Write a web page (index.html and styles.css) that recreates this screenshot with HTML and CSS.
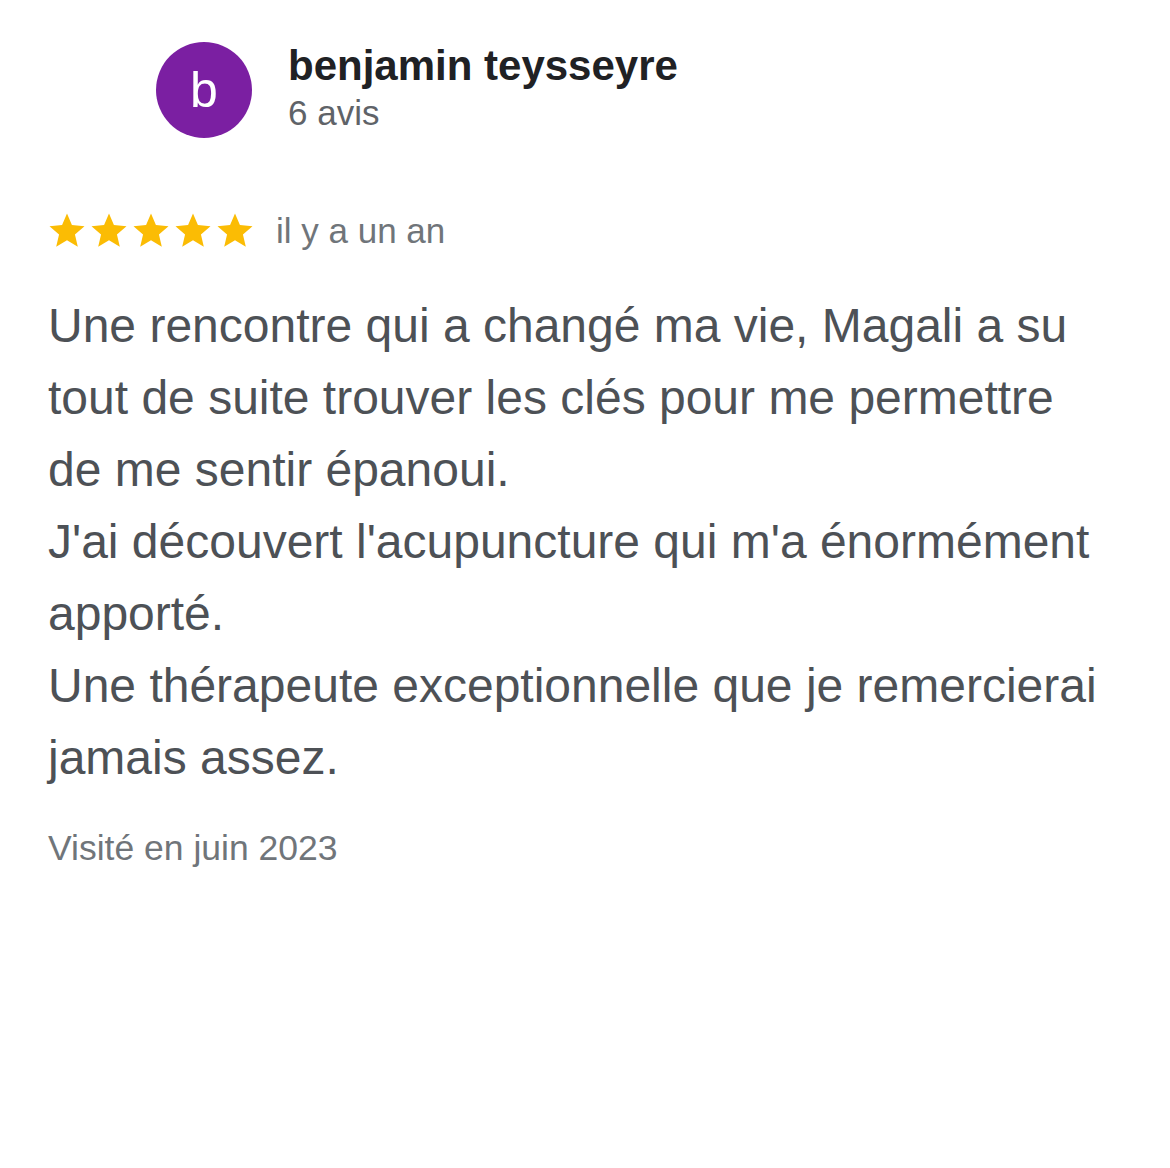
FILE: index.html
```html
<!DOCTYPE html>
<html lang="fr">
<head>
<meta charset="utf-8">
<link rel="stylesheet" href="styles.css">
</head>
<body>
<main class="review">
  <header class="author">
    <div class="avatar">b</div>
    <div class="author-info">
      <div class="author-name">benjamin teysseyre</div>
      <div class="author-count">6 avis</div>
    </div>
  </header>
  <div class="rating">
    <div class="stars">
      <svg class="star" viewBox="0 0 24 24"><path d="M12 17.27L18.18 21l-1.64-7.03L22 9.24l-7.19-.61L12 2 9.19 8.63 2 9.24l5.46 4.73L5.82 21z"/></svg>
      <svg class="star" viewBox="0 0 24 24"><path d="M12 17.27L18.18 21l-1.64-7.03L22 9.24l-7.19-.61L12 2 9.19 8.63 2 9.24l5.46 4.73L5.82 21z"/></svg>
      <svg class="star" viewBox="0 0 24 24"><path d="M12 17.27L18.18 21l-1.64-7.03L22 9.24l-7.19-.61L12 2 9.19 8.63 2 9.24l5.46 4.73L5.82 21z"/></svg>
      <svg class="star" viewBox="0 0 24 24"><path d="M12 17.27L18.18 21l-1.64-7.03L22 9.24l-7.19-.61L12 2 9.19 8.63 2 9.24l5.46 4.73L5.82 21z"/></svg>
      <svg class="star" viewBox="0 0 24 24"><path d="M12 17.27L18.18 21l-1.64-7.03L22 9.24l-7.19-.61L12 2 9.19 8.63 2 9.24l5.46 4.73L5.82 21z"/></svg>
    </div>
    <span class="date">il y a un an</span>
  </div>
  <p class="text">Une rencontre qui a changé ma vie, Magali a su tout de suite trouver les clés pour me permettre de me sentir épanoui.<br>J'ai découvert l'acupuncture qui m'a énormément apporté.<br>Une thérapeute exceptionnelle que je remercierai jamais assez.</p>
  <div class="visit">Visité en juin 2023</div>
</main>
</body>
</html>
```
FILE: styles.css
```css
html, body {
  margin: 0;
  padding: 0;
  background: #ffffff;
}
body {
  font-family: "Liberation Sans", Arial, Helvetica, sans-serif;
}
.review {
  padding: 42px 48px 0 48px;
  width: 1068px;
}
.author {
  display: flex;
  align-items: center;
  gap: 36px;
  padding-left: 108px;
}
.avatar {
  width: 96px;
  height: 96px;
  border-radius: 50%;
  background: #7b1fa2;
  color: #ffffff;
  font-size: 50px;
  line-height: 96px;
  text-align: center;
  flex: none;
}
.author-info {
  display: flex;
  flex-direction: column;
  margin-top: -4px;
}
.author-name {
  font-size: 42px;
  font-weight: bold;
  color: #202124;
  line-height: 50px;
}
.author-count {
  font-size: 35px;
  color: #5f6368;
  line-height: 44px;
}
.rating {
  display: flex;
  align-items: center;
  gap: 20px;
  margin-top: 72px;
  margin-left: -2px;
}
.stars {
  display: flex;
}
.star {
  width: 42px;
  height: 42px;
  fill: #fbbc04;
  display: block;
}
.date {
  font-size: 35px;
  color: #70757a;
}
.text {
  margin: 38px 0 0 0;
  font-size: 48px;
  line-height: 72px;
  color: #4d5156;
}
.visit {
  margin-top: 34px;
  font-size: 35.5px;
  color: #70757a;
}
```
